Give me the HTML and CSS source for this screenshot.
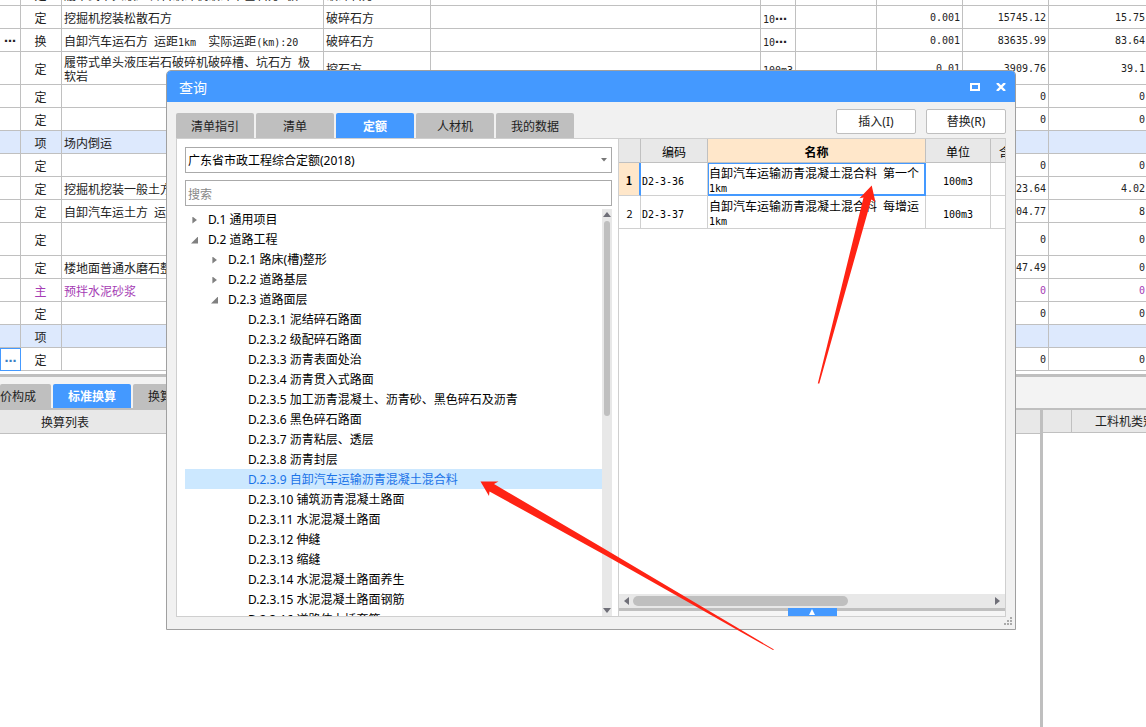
FILE: index.html
```html
<!DOCTYPE html>
<html lang="zh-CN">
<head>
<meta charset="utf-8">
<title>查询</title>
<link rel="stylesheet" href="styles.css">
</head>
<body>
<main class="workspace">
  <div class="sheet-view">
    <table class="sheet">
      <colgroup><col class="c-mark"><col class="c-type"><col class="c-name"><col class="c-feature"><col class="c-rest"><col class="c-unit"><col class="c-expr"><col class="c-num"><col class="c-num"><col class="c-last"></colgroup>
      <tbody>
        <tr><td></td><td>定</td><td>履带式单头液压岩石破碎机破碎平基石方<span class="mono"> </span>极</td><td>破碎石方</td><td></td><td></td><td></td><td></td><td></td><td></td></tr>
        <tr><td></td><td>定</td><td>挖掘机挖装松散石方</td><td>破碎石方</td><td></td><td><span class="mono">10<b class="dots">⋯</b></span></td><td></td><td>0.001</td><td>15745.12</td><td>15.75</td></tr>
        <tr><td><b class="dots">⋯</b></td><td>换</td><td>自卸汽车运石方<span class="mono"> </span>运距<span class="mono">1km&nbsp; </span>实际运距<span class="mono">(km):20</span></td><td>破碎石方</td><td></td><td><span class="mono">10<b class="dots">⋯</b></span></td><td></td><td>0.001</td><td>83635.99</td><td>83.64</td></tr>
        <tr class="tall"><td></td><td>定</td><td>履带式单头液压岩石破碎机破碎槽、坑石方<span class="mono"> </span>极<br>软岩</td><td>挖石方</td><td></td><td><span class="mono">100m3</span></td><td></td><td>0.01</td><td>3909.76</td><td>39.1</td></tr>
        <tr><td></td><td>定</td><td></td><td></td><td></td><td></td><td></td><td></td><td>0</td><td>0</td></tr>
        <tr><td></td><td>定</td><td></td><td></td><td></td><td></td><td></td><td></td><td>0</td><td>0</td></tr>
        <tr class="item"><td></td><td>项</td><td>场内倒运</td><td></td><td></td><td></td><td></td><td></td><td></td><td></td></tr>
        <tr><td></td><td>定</td><td></td><td></td><td></td><td></td><td></td><td></td><td>0</td><td>0</td></tr>
        <tr><td></td><td>定</td><td>挖掘机挖装一般土方</td><td></td><td></td><td></td><td></td><td></td><td>23.64</td><td>4.02</td></tr>
        <tr><td></td><td>定</td><td>自卸汽车运土方<span class="mono"> </span>运距</td><td></td><td></td><td></td><td></td><td></td><td>04.77</td><td>8</td></tr>
        <tr class="tall"><td></td><td>定</td><td></td><td></td><td></td><td></td><td></td><td></td><td>0</td><td>0</td></tr>
        <tr><td></td><td>定</td><td>楼地面普通水磨石整体</td><td></td><td></td><td></td><td></td><td></td><td>47.49</td><td>0</td></tr>
        <tr class="material"><td></td><td>主</td><td>预拌水泥砂浆</td><td></td><td></td><td></td><td></td><td></td><td>0</td><td>0</td></tr>
        <tr><td></td><td>定</td><td></td><td></td><td></td><td></td><td></td><td></td><td>0</td><td>0</td></tr>
        <tr class="item"><td></td><td>项</td><td></td><td></td><td></td><td></td><td></td><td></td><td></td><td></td></tr>
        <tr><td class="editing"><b class="dots">⋯</b></td><td>定</td><td></td><td></td><td></td><td></td><td></td><td></td><td>0</td><td>0</td></tr>
      </tbody>
    </table>
  </div>
  <nav class="lower-tabs">
    <button class="tab tab-cut" type="button">价构成</button>
    <button class="tab active" type="button">标准换算</button>
    <button class="tab" type="button">换算信息</button>
  </nav>
  <div class="lower">
    <section class="convert"><div class="pane-head">换算列表</div></section>
    <section class="resources"><div class="pane-head"><span class="corner"></span><span class="res-type">工料机类别</span></div></section>
  </div>
</main>

<div class="dialog" role="dialog" aria-labelledby="dialog-title">
  <header class="titlebar">
    <h1 id="dialog-title">查询</h1>
    <button class="win-btn" type="button" aria-label="最大化"><svg width="10" height="8" viewBox="0 0 10 8"><path d="M1 1h8v6H1z" fill="none" stroke="#fff" stroke-width="2"/></svg></button>
    <button class="win-btn" type="button" aria-label="关闭"><svg width="10" height="8" viewBox="0 0 10 8"><path d="M1 0l8 8M9 0l-8 8" fill="none" stroke="#fff" stroke-width="2.4"/></svg></button>
  </header>
  <div class="toolbar">
    <nav class="tabs">
      <button class="tab" type="button">清单指引</button>
      <button class="tab" type="button">清单</button>
      <button class="tab active" type="button">定额</button>
      <button class="tab" type="button">人材机</button>
      <button class="tab" type="button">我的数据</button>
    </nav>
    <div class="actions">
      <button class="action" type="button">插入(I)</button>
      <button class="action" type="button">替换(R)</button>
    </div>
  </div>
  <div class="panes">
    <section class="library">
      <div class="combo">
        <select class="field" aria-label="定额库"><option>广东省市政工程综合定额(2018)</option></select>
        <svg class="combo-arrow" width="6" height="4" viewBox="0 0 6 4"><path d="M0 0h6L3 3.5z" fill="#777"/></svg>
      </div>
      <input class="field" type="text" placeholder="搜索" aria-label="搜索">
      <div class="tree-view">
        <ul class="tree" role="tree">
          <li class="l1 closed" role="treeitem">D.1 通用项目</li>
          <li class="l1 open" role="treeitem">D.2 道路工程</li>
          <li class="l2 closed" role="treeitem">D.2.1 路床(槽)整形</li>
          <li class="l2 closed" role="treeitem">D.2.2 道路基层</li>
          <li class="l2 open" role="treeitem">D.2.3 道路面层</li>
          <li class="l3" role="treeitem">D.2.3.1 泥结碎石路面</li>
          <li class="l3" role="treeitem">D.2.3.2 级配碎石路面</li>
          <li class="l3" role="treeitem">D.2.3.3 沥青表面处治</li>
          <li class="l3" role="treeitem">D.2.3.4 沥青贯入式路面</li>
          <li class="l3" role="treeitem">D.2.3.5 加工沥青混凝土、沥青砂、黑色碎石及沥青</li>
          <li class="l3" role="treeitem">D.2.3.6 黑色碎石路面</li>
          <li class="l3" role="treeitem">D.2.3.7 沥青粘层、透层</li>
          <li class="l3" role="treeitem">D.2.3.8 沥青封层</li>
          <li class="l3 selected" role="treeitem" aria-selected="true">D.2.3.9 自卸汽车运输沥青混凝土混合料</li>
          <li class="l3" role="treeitem">D.2.3.10 铺筑沥青混凝土路面</li>
          <li class="l3" role="treeitem">D.2.3.11 水泥混凝土路面</li>
          <li class="l3" role="treeitem">D.2.3.12 伸缝</li>
          <li class="l3" role="treeitem">D.2.3.13 缩缝</li>
          <li class="l3" role="treeitem">D.2.3.14 水泥混凝土路面养生</li>
          <li class="l3" role="treeitem">D.2.3.15 水泥混凝土路面钢筋</li>
          <li class="l3" role="treeitem">D.2.3.16 道路伸力插套筋</li>
        </ul>
        <div class="vbar">
          <svg width="8" height="5" viewBox="0 0 8 5"><path d="M0 5h8L4 0z" fill="#6f6f78"/></svg>
          <div class="vtrack"><div class="vthumb"></div></div>
          <svg width="8" height="5" viewBox="0 0 8 5"><path d="M0 0h8L4 5z" fill="#6f6f78"/></svg>
        </div>
      </div>
    </section>
    <section class="results">
      <div class="result-view">
        <table class="result">
          <colgroup><col class="r-no"><col class="r-code"><col class="r-name"><col class="r-unit"><col class="r-price"></colgroup>
          <thead><tr><th></th><th>编码</th><th class="current">名称</th><th>单位</th><th class="cut">含税</th></tr></thead>
          <tbody>
            <tr><td class="current no">1</td><td><span class="mono">D2-3-36</span></td><td class="picked">自卸汽车运输沥青混凝土混合料<span class="mono"> </span>第一个<br><span class="mono">1km</span></td><td><span class="mono">100m3</span></td><td></td></tr>
            <tr><td class="no">2</td><td><span class="mono">D2-3-37</span></td><td>自卸汽车运输沥青混凝土混合料<span class="mono"> </span>每增运<br><span class="mono">1km</span></td><td><span class="mono">100m3</span></td><td></td></tr>
          </tbody>
        </table>
      </div>
      <div class="hbar">
        <svg width="5" height="8" viewBox="0 0 5 8"><path d="M5 0v8L0 4z" fill="#6f6f78"/></svg>
        <div class="htrack"><div class="hthumb"></div></div>
        <svg width="5" height="8" viewBox="0 0 5 8"><path d="M0 0v8l5-4z" fill="#6f6f78"/></svg>
      </div>
      <div class="drawer"><button class="drawer-btn" type="button" aria-label="展开"><svg width="6" height="6" viewBox="0 0 6 6"><path d="M0 6h6L3 0z" fill="#fff"/></svg></button></div>
    </section>
  </div>
  <footer class="dialog-foot">
    <svg width="8" height="8" viewBox="0 0 8 8" fill="#aaa"><path d="M6 0h2v2H6zM3 3h2v2H3zM6 3h2v2H6zM0 6h2v2H0zM3 6h2v2H3zM6 6h2v2H6z"/></svg>
  </footer>
</div>

<svg class="arrows" width="1146" height="727" viewBox="0 0 1146 727" fill="#ff2314" aria-hidden="true">
  <path d="M480.5 481.5L498.500 481.500L494 484L603 548L774 649.500L773 650L603 554L489.500 491.500L489 496z"/>
  <path d="M871.700 185.500L875.500 202.300L871.300 199.500L819.300 383.500L817.800 383.500L863.500 197.500L859.500 198.200z"/>
</svg>
</body>
</html>
```
FILE: styles.css
```css
* { box-sizing: border-box; }
body {
  margin: 0;
  height: 100vh;
  overflow: hidden;
  background: #fff;
  color: #222;
  font: 12px/14px "Noto Sans", "Noto Sans CJK SC", sans-serif;
}
button, input, select { font: inherit; color: inherit; }
table { border-collapse: separate; border-spacing: 0; table-layout: fixed; width: 100%; }
svg { display: block; flex: none; }
.mono { font: 10px/1 "DejaVu Sans Mono", monospace; white-space: pre; }
.dots { font: bold 12px/1 "DejaVu Sans", sans-serif; }

/* main workspace */
.workspace { display: flex; flex-direction: column; height: 100%; }
.sheet-view {
  display: flex;
  flex: none;
  flex-direction: column;
  justify-content: flex-end;
  height: 377px;
  padding-bottom: 3px;
  overflow: hidden;
  border-bottom: 3px solid #bfbfbf;
}
.c-mark { width: 21px; }
.c-type { width: 41px; }
.c-name { width: 262px; }
.c-feature { width: 107px; }
.c-unit { width: 35px; }
.c-expr { width: 81px; }
.c-num { width: 86px; }
.c-last { width: 97px; }
.sheet { flex: none; font-family: "Noto Sans CJK SC", sans-serif; }
.sheet tr { height: 23px; }
.sheet tr.tall { height: 33px; }
.sheet td {
  padding: 2px 2px 0;
  border-right: 1px solid #c0c0c0;
  border-bottom: 1px solid #c0c0c0;
  white-space: nowrap;
  overflow: hidden;
}
.sheet td:nth-child(1) { padding: 0; text-align: center; }
.sheet td:nth-child(2) { padding-right: 3px; text-align: center; }
.sheet td:nth-child(n+8) { text-align: right; font: 10px/14px "DejaVu Sans Mono", monospace; }
.sheet td:last-child { padding-right: 1px; border-right: 0; }
.sheet .item td { background: #dde9fd; }
.sheet .material td { color: #a53cb4; }
.sheet td.editing { border: 1px solid #4499ff; color: #3b7fc4; }

.tab {
  width: 78px;
  padding: 2px 0 0;
  border: 0;
  border-radius: 2px 2px 0 0;
  background: #bfbfbf;
  text-align: center;
}
.tab.active { background: #4499ff; color: #fff; font-weight: bold; }
.lower-tabs {
  display: flex;
  flex: none;
  gap: 2px;
  height: 33px;
  padding-top: 7px;
  background: #f3f3f3;
  border-bottom: 2px solid #bfbfbf;
}
.lower-tabs .tab-cut { width: 51px; padding-right: 15px; text-align: right; }
.lower { display: flex; flex: 1; }
.convert { flex: 1; }
.resources { width: 106px; border-left: 3px solid #bfbfbf; overflow: hidden; }
.pane-head {
  display: flex;
  align-items: center;
  height: 24px;
  background: #e8e8e8;
  border-bottom: 1px solid #c0c0c0;
  white-space: nowrap;
}
.convert .pane-head { padding: 2px 0 0 41px; }
.resources .pane-head { height: 23px; }
.corner { flex: none; width: 29px; height: 100%; border-right: 1px solid #c0c0c0; }
.res-type { padding: 2px 0 0 23px; }

/* query dialog */
.dialog {
  position: absolute;
  top: 70px;
  left: 166px;
  right: 130px;
  height: 560px;
  display: flex;
  flex-direction: column;
  border: 1px solid #a0a0a0;
  border-radius: 5px 5px 0 0;
  background: #f1f1f1;
  overflow: hidden;
}
.titlebar {
  display: flex;
  flex: none;
  align-items: center;
  gap: 6px;
  height: 31px;
  padding: 0 4px 0 12px;
  background: #4499ff;
  color: #fff;
}
.titlebar h1 { flex: 1; margin: 0; padding-top: 2px; font-size: 14px; font-weight: normal; line-height: 20px; }
.win-btn {
  display: grid;
  place-items: center;
  width: 20px;
  height: 20px;
  padding: 0;
  border: 0;
  background: none;
}
.toolbar {
  display: flex;
  flex: none;
  align-items: flex-end;
  justify-content: space-between;
  height: 36px;
  padding: 0 9px;
}
.tabs { display: flex; gap: 2px; height: 25px; }
.actions { display: flex; gap: 10px; padding-bottom: 4px; }
.action {
  width: 80px;
  height: 25px;
  padding: 0;
  border: 1px solid #bfbfbf;
  border-radius: 2px;
  background: #fff;
}
.panes {
  display: flex;
  flex: 1;
  min-height: 0;
  margin: 0 9px;
  border: 1px solid #cfcfcf;
}
.library {
  display: flex;
  flex-direction: column;
  flex: none;
  width: 442px;
  padding: 8px 6px 0 8px;
  border-right: 1px solid #cfcfcf;
  background: #fff;
  color: #000;
}
.field {
  display: block;
  flex: none;
  width: 100%;
  height: 26px;
  padding: 2px 2px 0;
  border: 1px solid #aaa;
  border-radius: 0;
  background: #fff;
  appearance: none;
}
.field::placeholder { color: #888; opacity: 1; }
.combo { position: relative; margin-bottom: 7px; }
.combo-arrow { position: absolute; right: 5px; top: 11px; }
.tree-view { display: flex; flex: 1; min-height: 0; margin-top: 3px; }
.tree { flex: 1; margin: 0; padding: 0; list-style: none; overflow: hidden; }
.tree li { display: flex; align-items: center; height: 20px; padding-top: 2px; line-height: 18px; white-space: nowrap; }
.l1 { padding-left: 6px; }
.l2 { padding-left: 26px; }
.l3 { padding-left: 63px; }
.closed::before, .open::before {
  content: "";
  width: 7px;
  height: 7px;
  margin-right: 10px;
  background: #808080;
}
.closed::before { clip-path: polygon(20% 0, 85% 50%, 20% 100%); }
.open::before { clip-path: polygon(100% 0, 100% 100%, 0 100%); }
.tree .selected { background: #cce8ff; color: #1a73e8; }
.vbar {
  display: flex;
  flex-direction: column;
  align-items: center;
  flex: none;
  width: 10px;
  padding: 3px 0;
  background: #e8e8e8;
}
.vtrack { flex: 1; width: 6px; padding: 4px 0; }
.vthumb { height: 51%; border-radius: 3px; background: #bfbfbf; }

.results { display: flex; flex: 1; flex-direction: column; min-width: 0; background: #fff; color: #000; }
.result-view { flex: 1; overflow: hidden; }
.r-no { width: 22px; }
.r-code { width: 67px; }
.r-name { width: 218px; }
.r-unit { width: 65px; }
.result { font-family: "Noto Sans CJK SC", sans-serif; }
.result th {
  height: 24px;
  padding: 2px 0 0;
  border: solid #c0c0c0;
  border-width: 0 1px 1px 0;
  background: #e8e8e8;
  font-weight: normal;
}
.result th.current { background: #ffe7ca; font-weight: bold; }
.result th.cut { overflow: hidden; white-space: nowrap; text-align: left; padding-left: 8px; border-right: 0; }
.result td {
  height: 33px;
  padding: 2px 1px 0;
  border: solid #d0d0d0;
  border-width: 0 1px 1px 0;
  white-space: nowrap;
}
.result td:last-child { border-right: 0; }
.result td:nth-child(4) { text-align: center; }
.result .no { text-align: center; font-size: 11px; }
.result td.current { background: #ffe7ca; border-right: 2px solid #4499ff; font-weight: bold; }
.result td.picked { box-shadow: inset 0 0 0 1px #4499ff; border-color: #4499ff; }
.hbar {
  display: flex;
  align-items: center;
  flex: none;
  height: 14px;
  padding: 0 5px;
  background: #e8e8e8;
}
.htrack { flex: 1; padding: 0 4px; }
.hthumb { width: 60%; height: 10px; border-radius: 5px; background: #bfbfbf; }
.drawer {
  display: flex;
  flex: none;
  justify-content: center;
  height: 8px;
  background: linear-gradient(#bfbfbf 3px, #f5f5f5 3px);
}
.drawer-btn {
  display: grid;
  place-items: center;
  width: 49px;
  height: 8px;
  padding: 0;
  border: 0;
  background: #4499ff;
}
.dialog-foot { display: flex; flex: none; justify-content: flex-end; height: 12px; padding: 0 3px; }

/* annotation arrows drawn over the whole window */
.arrows { position: absolute; top: 0; left: 0; pointer-events: none; }
```
